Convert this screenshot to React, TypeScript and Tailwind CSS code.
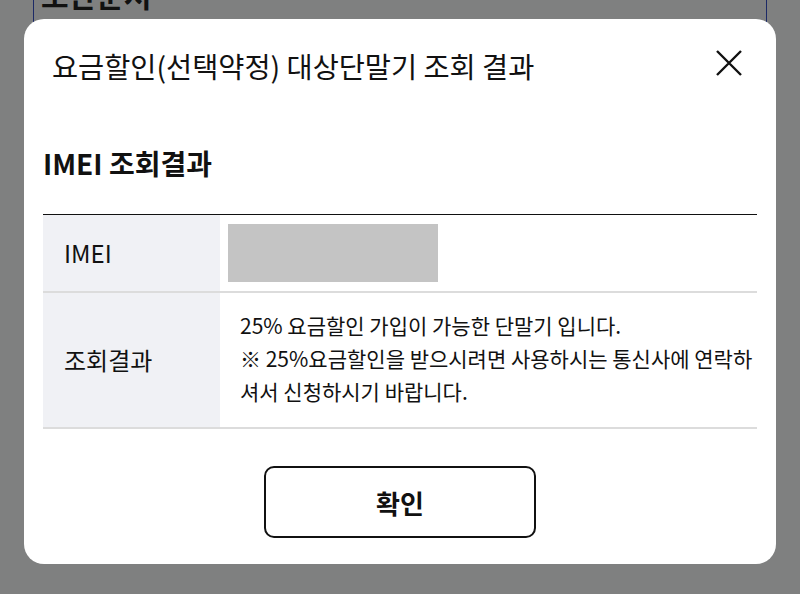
import React from 'react';

const font = { fontFamily: '"Noto Sans CJK KR", "Noto Sans", sans-serif' };

export default function App() {
  return (
    <div className="relative w-[800px] h-[594px] overflow-hidden bg-[#7f8080]" style={font}>
      {/* page behind the dimmed overlay */}
      <div className="mx-[33px] h-[300px] border-x border-[#1c2a66]">
        <div className="-mt-[24px] pl-[7px] text-[30px] font-bold leading-[36px] text-[#111]">보안문서</div>
      </div>

      {/* modal */}
      <div className="absolute left-[24px] top-[19px] w-[752px] h-[545px] rounded-[20px] bg-white px-[19px]">
        <div className="relative flex h-[94px] items-center pl-[9px]">
          <h2 className="text-[28.4px] leading-[36px] text-[#111]">요금할인(선택약정) 대상단말기 조회 결과</h2>
          <button className="absolute right-[14px] top-[30px] h-[28px] w-[28px]">
            <svg viewBox="0 0 28 28" className="h-[28px] w-[28px]" fill="none" stroke="#111" strokeWidth="2.4">
              <path d="M2 2 L26 26 M26 2 L2 26" />
            </svg>
          </button>
        </div>

        <h3 className="pt-[31px] text-[28px] font-bold leading-[38px] text-[#111]">IMEI 조회결과</h3>

        <div className="mt-[32px] border-t border-[#111]">
          <div className="flex h-[78px] border-b-2 border-[#dcdcdc]">
            <div className="flex w-[177px] items-center bg-[#f0f1f5] pl-[21px] text-[24px] text-[#111]">IMEI</div>
            <div className="flex items-center pl-[8px]">
              <div className="h-[58px] w-[210px] bg-[#c4c4c4]" />
            </div>
          </div>
          <div className="flex h-[136px] border-b-2 border-[#dcdcdc]">
            <div className="flex w-[177px] items-center bg-[#f0f1f5] pl-[21px] text-[24px] text-[#111]">조회결과</div>
            <div className="flex flex-1 items-center pl-[20px] pr-[2px] pb-[3px] text-[21px] leading-[33px] text-[#111]">
              <p>
                25% 요금할인 가입이 가능한 단말기 입니다.
                <br />
                ※ 25%요금할인을 받으시려면 사용하시는 통신사에 연락하셔서 신청하시기 바랍니다.
              </p>
            </div>
          </div>
        </div>

        <div className="mt-[37px] flex justify-center">
          <button className="h-[72px] w-[272px] rounded-[10px] border-2 border-[#111] text-[26px] font-bold text-[#111]">
            확인
          </button>
        </div>
      </div>
    </div>
  );
}
